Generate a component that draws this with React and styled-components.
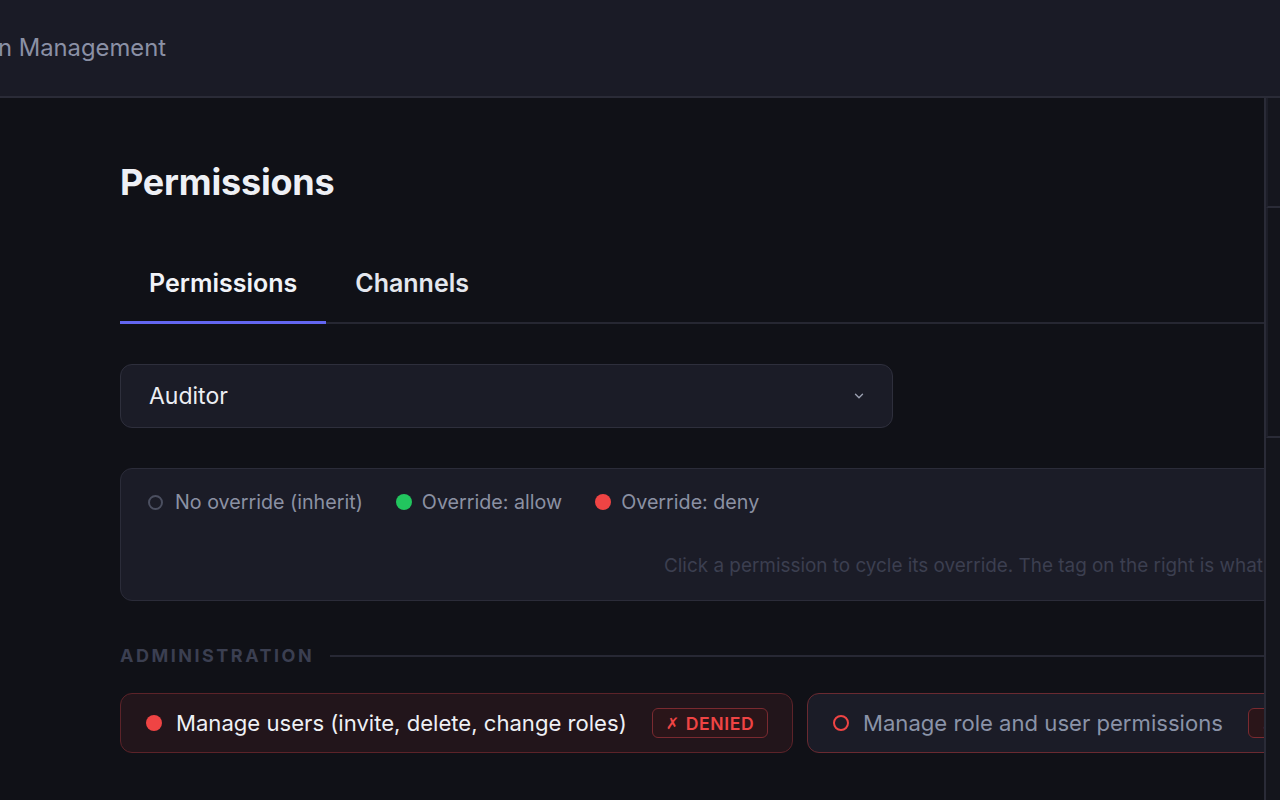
import React from "react";
import styled, { createGlobalStyle } from "styled-components";

const GlobalStyle = createGlobalStyle`
  html, body { margin: 0; padding: 0; background: #101117; }
  body { font-family: Inter, "Noto Sans", sans-serif; -webkit-font-smoothing: antialiased; }
  * { box-sizing: border-box; }
`;

const Shell = styled.div`
  display: flex;
  flex-direction: column;
  width: 1280px;
  height: 800px;
  overflow: hidden;
  background: #101117;
`;

const TopBar = styled.header`
  flex: 0 0 98px;
  display: flex;
  align-items: center;
  background: #1a1b26;
  border-bottom: 2px solid #2a2b37;
  overflow: hidden;
`;

/* the title sits flush against its right edge and runs off the left side */
const TitleSlot = styled.div`
  width: 166px;
  display: flex;
  justify-content: flex-end;
  margin-top: -2px;
`;

const TopTitle = styled.span`
  flex: 0 0 auto;
  font-size: 23.8px;
  color: #8a90a5;
  white-space: nowrap;
`;

const Body = styled.div`
  flex: 1;
  display: flex;
  min-height: 0;
`;

const Main = styled.main`
  flex: 1;
  overflow: hidden;
  padding: 61px 0 0 120px;
`;

const Content = styled.div`
  width: 1360px;
  display: flex;
  flex-direction: column;
`;

const Heading = styled.h1`
  margin: 0;
  font-size: 36px;
  line-height: 46px;
  font-weight: 700;
  color: #eef0f5;
  letter-spacing: -0.2px;
`;

const TabList = styled.div`
  margin-top: 50px;
  display: flex;
  border-bottom: 2px solid #262732;
`;

const Tab = styled.button`
  appearance: none;
  background: none;
  border: none;
  margin-bottom: -2px;
  padding: 0 29px 23px 29px;
  height: 69px;
  display: flex;
  align-items: flex-end;
  font-family: inherit;
  font-size: 25px;
  font-weight: 600;
  color: ${(p) => (p.$active ? "#f1f3f8" : "#e4e7ee")};
  border-bottom: 3px solid ${(p) => (p.$active ? "#6366f1" : "transparent")};
  cursor: pointer;
`;

const Select = styled.div`
  margin-top: 40px;
  width: 773px;
  height: 64px;
  display: flex;
  align-items: center;
  justify-content: space-between;
  padding: 0 26px 0 28px;
  background: #1b1c27;
  border: 1.5px solid #2e2f3c;
  border-radius: 12px;
  font-size: 23px;
  color: #eceef3;
`;

const Chevron = styled.svg`
  width: 14px;
  height: 14px;
  color: #9ca1b1;
`;

const LegendCard = styled.div`
  margin-top: 40px;
  height: 133px;
  display: flex;
  flex-direction: column;
  padding: 21px 28px 0 27px;
  background: #1b1c27;
  border: 1.5px solid #2b2c39;
  border-radius: 12px;
`;

const LegendRow = styled.div`
  display: flex;
  align-items: center;
  gap: 33px;
`;

const LegendItem = styled.span`
  display: flex;
  align-items: center;
  gap: ${(p) => (p.$tight ? 12 : 10)}px;
  font-size: 19.7px;
  color: #8b91a3;
`;

const Dot = styled.span`
  width: ${(p) => p.$size || 16}px;
  height: ${(p) => p.$size || 16}px;
  border-radius: 50%;
  flex: 0 0 auto;
  background: ${(p) => (p.$hollow ? "transparent" : p.$color)};
  border: ${(p) => (p.$hollow ? `2px solid ${p.$color}` : "none")};
`;

const Hint = styled.p`
  margin: 40px 0 0 516px;
  font-size: 18.9px;
  color: #3c3f50;
  white-space: nowrap;
`;

const SectionHead = styled.div`
  margin-top: 44px;
  display: flex;
  align-items: center;
  gap: 16px;
`;

const SectionLabel = styled.span`
  font-size: 18px;
  font-weight: 700;
  letter-spacing: 2.5px;
  color: #3b3f51;
`;

const SectionRule = styled.span`
  flex: 1;
  height: 2px;
  background: #272834;
`;

const PermGrid = styled.div`
  margin-top: 27px;
  display: grid;
  grid-template-columns: 673px 673px;
  gap: 14px;
`;

const PermCard = styled.div`
  height: 60px;
  display: flex;
  align-items: center;
  padding: 0 24px 0 25px;
  border-radius: 12px;
  background: ${(p) => (p.$denied ? "#22151b" : "#1b1c27")};
  border: 1.5px solid ${(p) => (p.$denied ? "#5c2329" : "#6a2a31")};
`;

const PermName = styled.span`
  margin: 0 25px 0 14px;
  font-size: 22.1px;
  color: ${(p) => (p.$muted ? "#8a93a8" : "#eef0f5")};
  white-space: nowrap;
`;

const Badge = styled.span`
  height: 30px;
  display: flex;
  align-items: center;
  padding: 0 13px;
  border-radius: 6px;
  border: 1.5px solid #7a2a30;
  background: #2a1519;
  font-family: Inter, "DejaVu Sans", sans-serif;
  font-size: 17.6px;
  font-weight: 600;
  letter-spacing: 0.6px;
  color: #ef4444;
  white-space: nowrap;
`;

const Cross = styled.span`
  font-family: "DejaVu Sans", sans-serif;
  font-weight: 700;
  font-size: 16px;
  margin-right: 6px;
`;

const Aside = styled.aside`
  flex: 0 0 16px;
  display: flex;
  flex-direction: column;
  border-left: 2px solid #2a2b37;
  background: #14151c;
`;

const AsidePanel = styled.div`
  height: ${(p) => p.$h}px;
  border-left: 2px solid #1d1e28;
  border-bottom: 2px solid #2a2b37;
  background: ${(p) => p.$bg};
`;

const permissions = [
  { name: "Manage users (invite, delete, change roles)", denied: true },
  { name: "Manage role and user permissions", denied: false },
];

export default function App() {
  return (
    <>
      <GlobalStyle />
      <Shell>
        <TopBar>
          <TitleSlot>
            <TopTitle>Permission Management</TopTitle>
          </TitleSlot>
        </TopBar>
        <Body>
          <Main>
            <Content>
              <Heading>Permissions</Heading>
              <TabList>
                <Tab $active>Permissions</Tab>
                <Tab>Channels</Tab>
              </TabList>
              <Select>
                <span>Auditor</span>
                <Chevron viewBox="0 0 24 24" fill="none" stroke="currentColor" strokeWidth="2.4" strokeLinecap="round" strokeLinejoin="round">
                  <path d="M6 9l6 6 6-6" />
                </Chevron>
              </Select>
              <LegendCard>
                <LegendRow>
                  <LegendItem $tight>
                    <Dot $hollow $color="#4b4f60" $size={15} />
                    No override (inherit)
                  </LegendItem>
                  <LegendItem>
                    <Dot $color="#22c55e" />
                    Override: allow
                  </LegendItem>
                  <LegendItem>
                    <Dot $color="#ef4444" />
                    Override: deny
                  </LegendItem>
                </LegendRow>
                <Hint>
                  Click a permission to cycle its override. The tag on the right is what the role ends up with.
                </Hint>
              </LegendCard>
              <SectionHead>
                <SectionLabel>ADMINISTRATION</SectionLabel>
                <SectionRule />
              </SectionHead>
              <PermGrid>
                {permissions.map((p) => (
                  <PermCard key={p.name} $denied={p.denied}>
                    <Dot $hollow={!p.denied} $color="#ef4444" $size={16} />
                    <PermName $muted={!p.denied}>{p.name}</PermName>
                    <Badge>
                      <Cross>✗</Cross>DENIED
                    </Badge>
                  </PermCard>
                ))}
              </PermGrid>
            </Content>
          </Main>
          <Aside>
            <AsidePanel $h={110} $bg="#15161e" />
            <AsidePanel $h={230} $bg="#13141b" />
          </Aside>
        </Body>
      </Shell>
    </>
  );
}
